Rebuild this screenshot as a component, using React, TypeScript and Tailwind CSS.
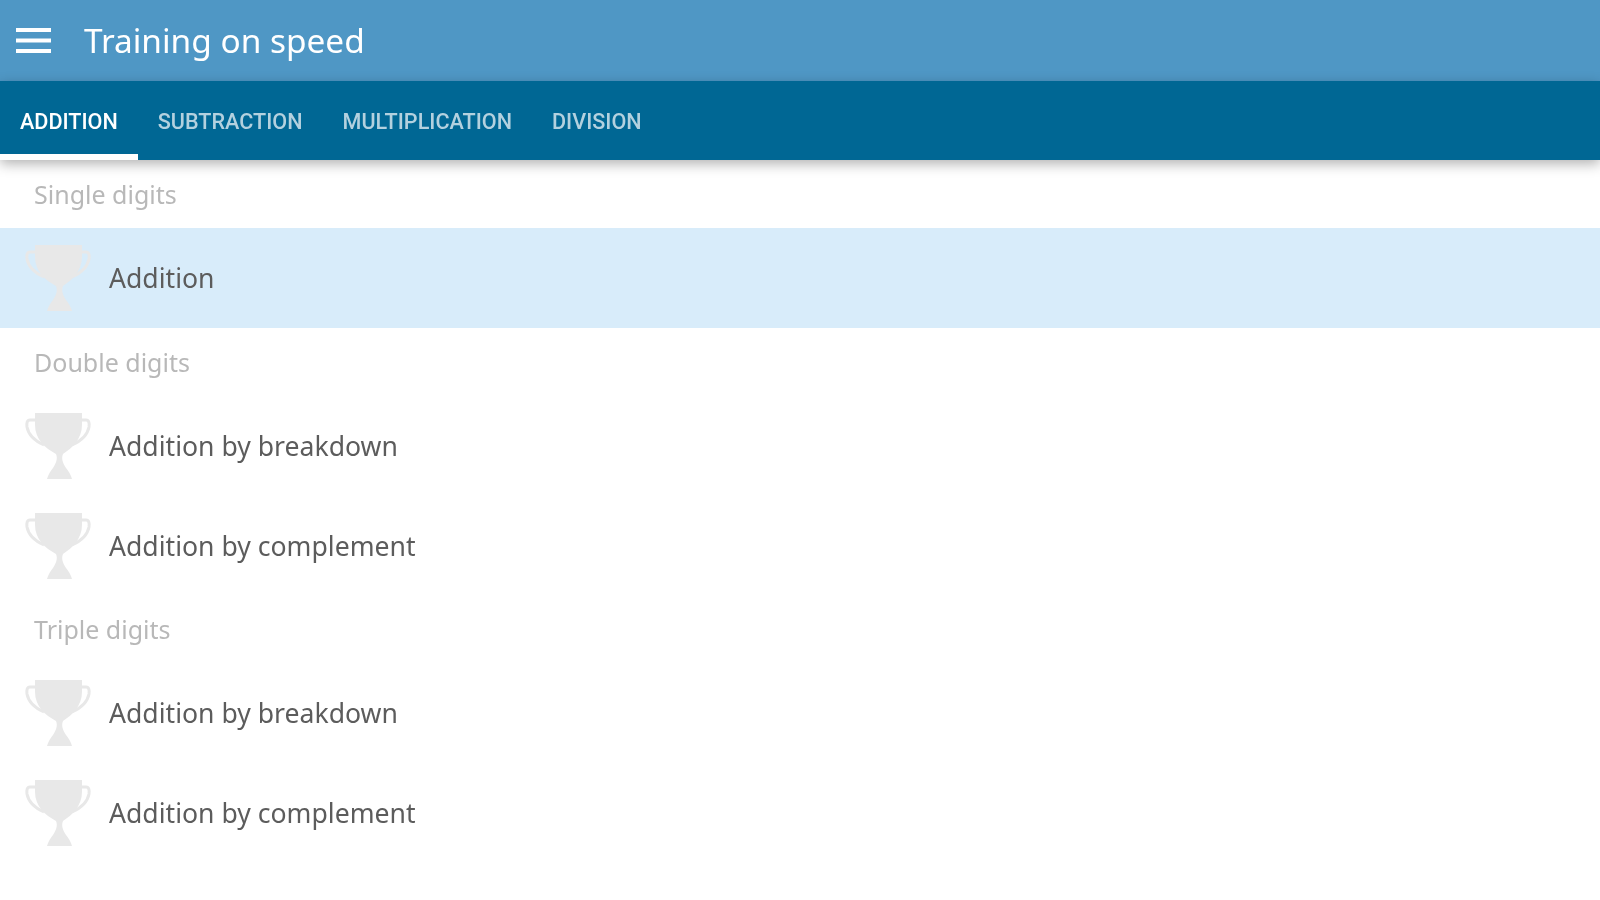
function Trophy() {
  return (
    <svg viewBox="0 0 66 66" className="w-[66px] h-[66px] shrink-0 text-[#e8e8e8]" fill="none">
      {/* handles */}
      <path d="M12 7H5C2 7 1.5 10 2 14C3.5 22 10 28 19 32" stroke="currentColor" strokeWidth="3" />
      <path d="M54 7H61C64 7 64.5 10 64 14C62.5 22 56 28 47 32" stroke="currentColor" strokeWidth="3" />
      {/* cup, stem and foot */}
      <path
        d="M10 0H57V12C57 26 47 35 38 41C36 46 38 50 41 55C44 59 46 62 47 66H22C23 62 25 59 28 55C31 50 33 46 31 41C20 35 10 26 10 12Z"
        fill="currentColor"
      />
    </svg>
  );
}

function HamburgerIcon() {
  return (
    <svg viewBox="0 0 35 25" className="w-[35px] h-[25px] text-white" fill="currentColor">
      <rect x="0" y="0" width="35" height="4" />
      <rect x="0" y="10.5" width="35" height="4" />
      <rect x="0" y="21" width="35" height="4" />
    </svg>
  );
}

function SectionTitle({ label, short }: { label: string; short?: boolean }) {
  return (
    <div className={`${short ? 'h-[67px]' : 'h-[68px]'} pl-[34px] pt-[1px] flex items-center text-[25px] text-[#b8b8b8] font-['Noto_Sans',sans-serif]`}>
      {label}
    </div>
  );
}

function Row({ label, active }: { label: string; active?: boolean }) {
  return (
    <div className={`h-[100px] pl-[25px] flex items-center gap-[18px] ${active ? 'bg-[#d8ecfa]' : 'bg-white'}`}>
      <Trophy />
      <span className="pt-[2px] text-[26.6px] text-[#5c5c5c] font-['Noto_Sans',sans-serif]">{label}</span>
    </div>
  );
}

const tabs = ['ADDITION', 'SUBTRACTION', 'MULTIPLICATION', 'DIVISION'];

export default function App() {
  return (
    <div className="w-[1600px] h-[900px] bg-white overflow-hidden flex flex-col blur-[0.6px]">
      {/* Toolbar */}
      <div className="h-[81px] bg-[#4f97c5] flex items-center pl-[16px] text-white">
        <HamburgerIcon />
        <span className="ml-[33px] text-[33.4px] font-['Noto_Sans',sans-serif]">Training on speed</span>
      </div>

      {/* Tabs */}
      <div className="relative z-10 h-[79px] bg-[#006794] flex shadow-[0_4px_12px_rgba(0,0,0,0.3)] font-['Roboto',sans-serif] font-medium text-[21.6px]">
        {tabs.map((tab, i) => (
          <div
            key={tab}
            className={`px-[20px] flex items-center border-b-[6px] pt-[9px] ${
              i === 0 ? 'border-white text-white' : 'border-transparent text-[#b3d1df]'
            }`}
          >
            {tab}
          </div>
        ))}
      </div>

      {/* List */}
      <SectionTitle label="Single digits" />
      <Row label="Addition" active />
      <SectionTitle label="Double digits" />
      <Row label="Addition by breakdown" />
      <Row label="Addition by complement" />
      <SectionTitle label="Triple digits" short />
      <Row label="Addition by breakdown" />
      <Row label="Addition by complement" />
    </div>
  );
}
